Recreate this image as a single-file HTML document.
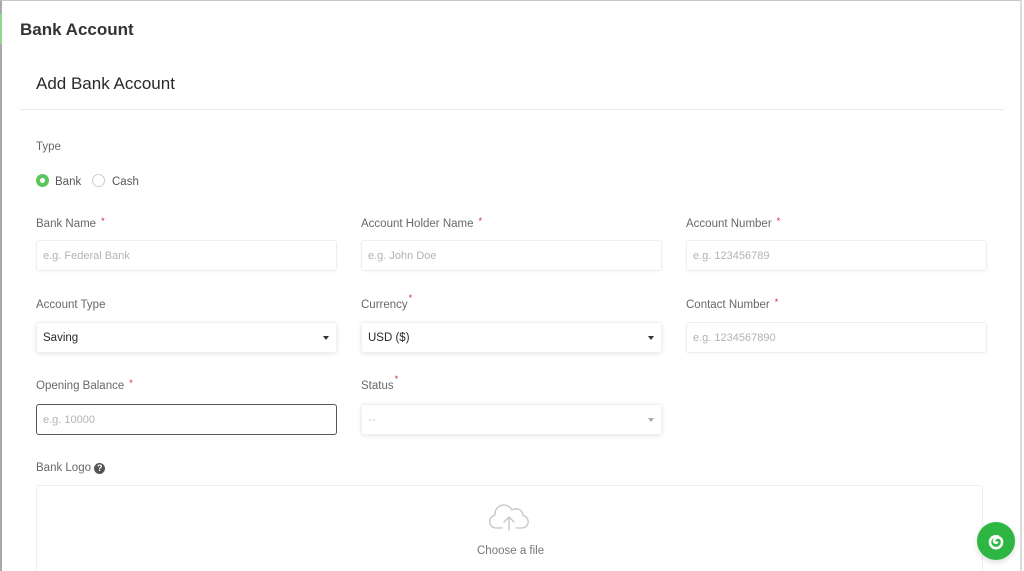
<!DOCTYPE html>
<html style="overflow:hidden;height:571px"><head><meta charset="utf-8"><style>
*{box-sizing:border-box;margin:0;padding:0}
body{width:1024px;height:571px;overflow:hidden;background:#fff;font-family:"Liberation Sans",Arial,sans-serif;position:relative}
.frame{position:absolute;left:0;top:0;width:1022px;height:571px;border-left:2px solid #a9a9a9;border-top:1px solid #c8c8c8;border-right:2px solid #dcdcdc}
.greenbar{position:absolute;left:0;top:14px;width:2px;height:30px;background:#8fd88f}
.h1{position:absolute;left:20px;top:20px;font-size:17px;font-weight:bold;color:#333}
.h2{position:absolute;left:36px;top:74px;font-size:17px;color:#28292b}
.hr{position:absolute;left:20px;right:20px;top:109px;height:1px;background:#eaeaea}
.lbl{position:absolute;font-size:11.5px;color:#66686b;line-height:14px}
.star{color:#d2222d;font-size:9px;margin-left:5px;position:relative;top:-3px}
.star2{color:#d2222d;font-size:9px;margin-left:1px;position:relative;top:-7px}
.inp{position:absolute;width:301px;height:31px;border:1px solid #eeeeee;border-radius:3px;font-size:11px;color:#b3b3b3;padding:9px 6px;box-shadow:0 1px 3px rgba(0,0,0,.04)}
.sel{color:#28292b;font-size:11.5px;border-color:#f0f0f0;box-shadow:0 1px 4px rgba(0,0,0,.1)}
.caret{position:absolute;right:7px;top:13px;width:0;height:0;border-left:3.5px solid transparent;border-right:3.5px solid transparent;border-top:4px solid #333}
.radio{position:absolute;width:13px;height:13px;border-radius:50%}
</style></head><body>
<div class="frame"></div>
<div class="greenbar"></div>
<div class="h1">Bank Account</div>
<div class="h2">Add Bank Account</div>
<div class="hr"></div>
<div class="lbl" style="left:36px;top:140px">Type</div>
<div class="radio" style="left:36px;top:174px;background:#5cc55c"><div style="position:absolute;left:4px;top:4px;width:5px;height:5px;border-radius:50%;background:#fff"></div></div>
<div class="lbl" style="left:55px;top:175px;color:#555">Bank</div>
<div class="radio" style="left:92px;top:174px;border:1px solid #ccc"></div>
<div class="lbl" style="left:112px;top:175px;color:#555">Cash</div>

<div class="lbl" style="left:36px;top:217px">Bank Name<span class="star">*</span></div>
<div class="lbl" style="left:361px;top:217px">Account Holder Name<span class="star">*</span></div>
<div class="lbl" style="left:686px;top:217px">Account Number<span class="star">*</span></div>
<div class="inp" style="left:36px;top:240px">e.g. Federal Bank</div>
<div class="inp" style="left:361px;top:240px">e.g. John Doe</div>
<div class="inp" style="left:686px;top:240px">e.g. 123456789</div>

<div class="lbl" style="left:36px;top:298px">Account Type</div>
<div class="lbl" style="left:361px;top:298px">Currency<span class="star2">*</span></div>
<div class="lbl" style="left:686px;top:298px">Contact Number<span class="star">*</span></div>
<div class="inp sel" style="left:36px;top:322px">Saving<div class="caret"></div></div>
<div class="inp sel" style="left:361px;top:322px">USD ($)<div class="caret"></div></div>
<div class="inp" style="left:686px;top:322px">e.g. 1234567890</div>

<div class="lbl" style="left:36px;top:379px">Opening Balance<span class="star">*</span></div>
<div class="lbl" style="left:361px;top:379px">Status<span class="star2">*</span></div>
<div class="inp" style="left:36px;top:404px;border:1px solid #555;border-radius:3px;box-shadow:none">e.g. 10000</div>
<div class="inp sel" style="left:361px;top:404px;color:#ccc">--<div class="caret" style="border-top-color:#aaa"></div></div>

<div class="lbl" style="left:36px;top:461px">Bank Logo <span style="display:inline-block;width:11px;height:11px;border-radius:50%;background:#555;color:#fff;font-size:9px;font-weight:bold;text-align:center;line-height:11px;vertical-align:0">?</span></div>
<div style="position:absolute;left:36px;top:485px;width:947px;height:100px;border:1px solid #eeeeee;border-radius:3px"></div>
<svg style="position:absolute;left:488px;top:504px" width="42" height="28" viewBox="0 0 42 28" fill="none" stroke="#c4c4c4" stroke-width="1.3" stroke-linecap="round" stroke-linejoin="round">
<path d="M14 24H8a6.5 6.5 0 0 1-1-12.9A9 9 0 0 1 24 6a7 7 0 0 1 11 5.5A6.3 6.3 0 0 1 34 24h-6"/>
<path d="M21 26V13M16 18l5-5 5 5"/>
</svg>
<div class="lbl" style="left:477px;top:544px;color:#777">Choose a file</div>

<div style="position:absolute;left:977px;top:522px;width:38px;height:38px;border-radius:50%;background:#2db742;box-shadow:0 2px 6px rgba(0,0,0,.15)">
<svg width="38" height="38" viewBox="0 0 38 38" fill="none" stroke="#fff" stroke-width="2.6" stroke-linecap="round"><path d="M21 14.5A6 6 0 1 0 25 20a4 4 0 0 0-8-1 2 2 0 0 0 3 1.5"/></svg>
</div>
</body></html>
